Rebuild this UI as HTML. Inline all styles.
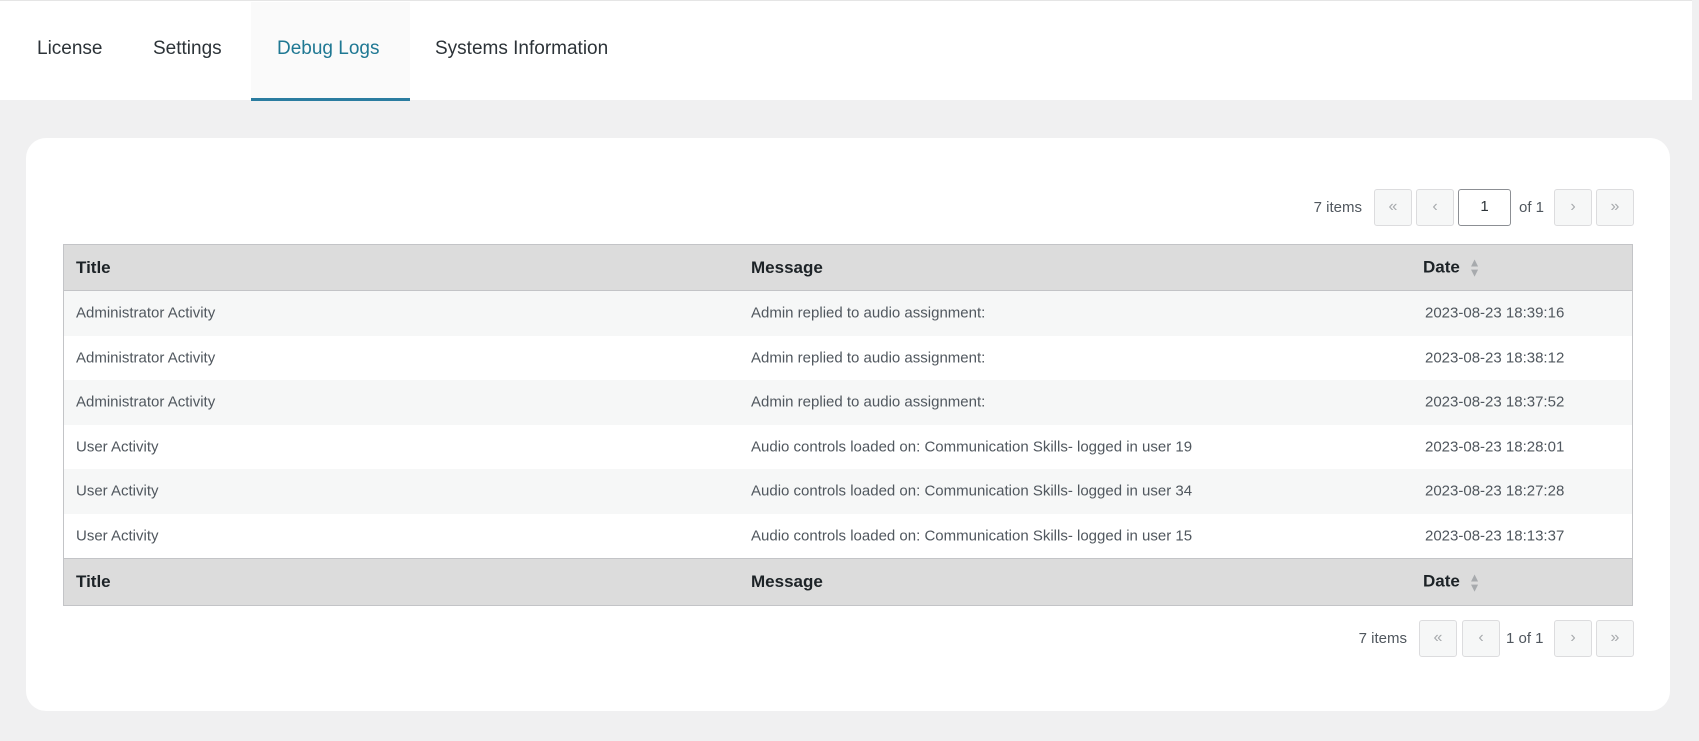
<!DOCTYPE html>
<html><head><style>
*{margin:0;padding:0;box-sizing:border-box}
body{width:1699px;height:741px;background:#f0f0f1;font-family:"Liberation Sans",sans-serif;position:relative;overflow:hidden;color:#3c434a}
.hdr{position:absolute;left:0;top:0;width:1692px;height:100px;background:#fff;border-top:1px solid #e5e5e5}
.tab{position:absolute;top:37px;font-size:19px;color:#2c3338}
.act{position:absolute;left:251px;top:1px;width:159px;height:99px;background:#fafafa;border-bottom:3px solid #2a7ca0}
.card{position:absolute;left:26px;top:138px;width:1644px;height:573px;background:#fff;border-radius:20px}
.t{position:absolute;left:63px;width:1570px;border:1px solid #c3c4c7}
.th{position:absolute;left:63px;width:1570px;height:47px;background:#dcdcdc;border:1px solid #c3c4c7;font-size:17px;color:#1d2327;font-weight:bold}
.th span,.r span{position:absolute;top:50%;transform:translateY(-50%)}
.r{position:absolute;left:64px;width:1568px;height:44.5px;font-size:15px;color:#50575e}
.r.o{background:#f6f7f7}
.c1{left:12px}.c2{left:687px}.c3{left:1361px}
.hc3{left:1359px}
.sort{display:inline-block;margin-left:4px;vertical-align:middle;color:#a7aaad;font-size:12px;line-height:10px}
.b{position:absolute;width:38px;height:37px;border:1px solid #dcdcde;background:#f6f7f7;border-radius:3px;color:#a7aaad;font-size:16px;text-align:center;line-height:34px}
.txt{position:absolute;font-size:15px;color:#50575e}
</style></head><body>
<div class="hdr">
<div class="act"></div>
<div class="tab" style="left:37px">License</div>
<div class="tab" style="left:153px">Settings</div>
<div class="tab" style="left:277px;color:#1f7893">Debug Logs</div>
<div class="tab" style="left:435px">Systems Information</div>
</div>
<div class="card"></div>
<div class="txt" style="right:337px;top:199px">7 items</div>
<div class="b" style="left:1374px;top:189px">«</div>
<div class="b" style="left:1416px;top:189px">‹</div>
<div class="b" style="left:1458px;top:189px;width:53px;background:#fff;border-color:#8c8f94;color:#2c3338;font-size:15px">1</div>
<div class="txt" style="left:1519px;top:199px">of 1</div>
<div class="b" style="left:1554px;top:189px">›</div>
<div class="b" style="left:1596px;top:189px">»</div>

<div class="th" style="top:244px"><span class="c1">Title</span><span class="c2">Message</span><span class="hc3">Date <span class="sort" style="position:static;transform:none">▲<br>▼</span></span></div>
<div class="r o" style="top:291px"><span class="c1">Administrator Activity</span><span class="c2">Admin replied to audio assignment:</span><span class="c3">2023-08-23 18:39:16</span></div>
<div class="r" style="top:335.5px"><span class="c1">Administrator Activity</span><span class="c2">Admin replied to audio assignment:</span><span class="c3">2023-08-23 18:38:12</span></div>
<div class="r o" style="top:380px"><span class="c1">Administrator Activity</span><span class="c2">Admin replied to audio assignment:</span><span class="c3">2023-08-23 18:37:52</span></div>
<div class="r" style="top:424.5px"><span class="c1">User Activity</span><span class="c2">Audio controls loaded on: Communication Skills- logged in user 19</span><span class="c3">2023-08-23 18:28:01</span></div>
<div class="r o" style="top:469px"><span class="c1">User Activity</span><span class="c2">Audio controls loaded on: Communication Skills- logged in user 34</span><span class="c3">2023-08-23 18:27:28</span></div>
<div class="r" style="top:513.5px"><span class="c1">User Activity</span><span class="c2">Audio controls loaded on: Communication Skills- logged in user 15</span><span class="c3">2023-08-23 18:13:37</span></div>
<div class="t" style="top:244px;height:362px;pointer-events:none"></div>
<div class="th" style="top:558px;height:48px"><span class="c1">Title</span><span class="c2">Message</span><span class="hc3">Date <span class="sort" style="position:static;transform:none">▲<br>▼</span></span></div>

<div class="txt" style="right:292px;top:630px">7 items</div>
<div class="b" style="left:1419px;top:620px">«</div>
<div class="b" style="left:1462px;top:620px">‹</div>
<div class="txt" style="left:1506px;top:630px">1 of 1</div>
<div class="b" style="left:1554px;top:620px">›</div>
<div class="b" style="left:1596px;top:620px">»</div>
</body></html>
